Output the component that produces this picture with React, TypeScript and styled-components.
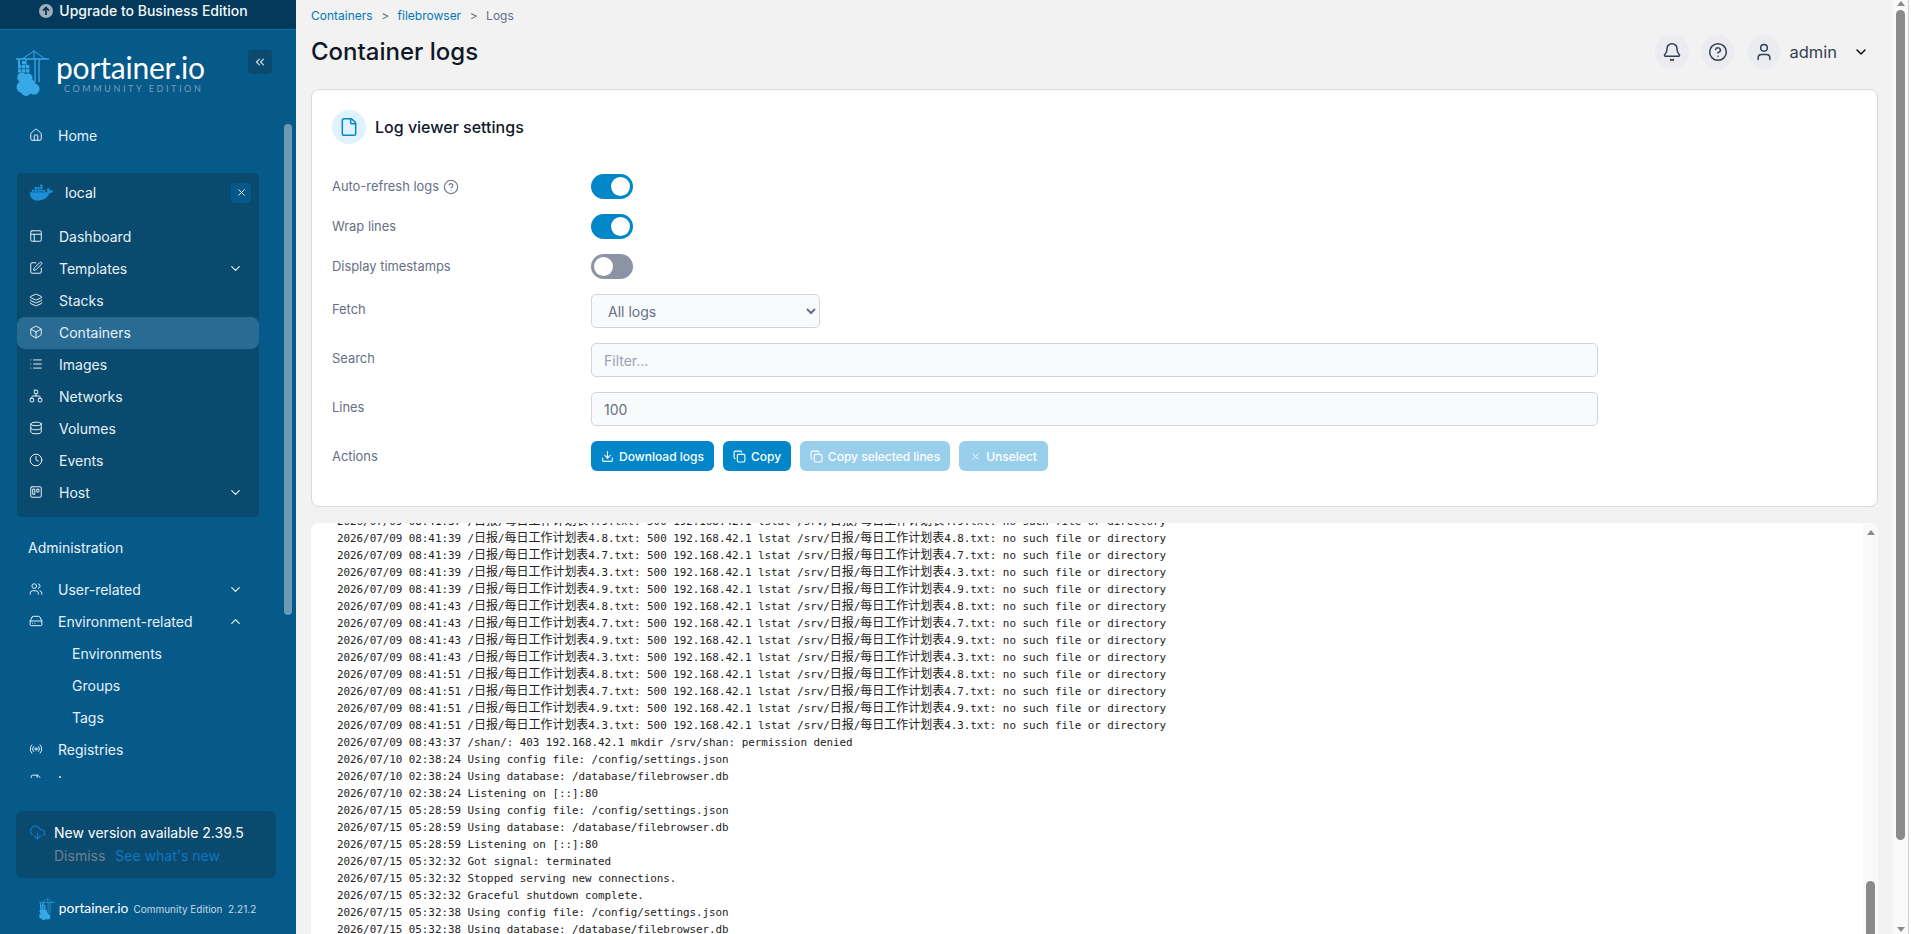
import React from 'react';
import styled, { createGlobalStyle } from 'styled-components';
import {
  Home, X, PanelsTopLeft, SquarePen, Layers, Box, List, Network, Database, Clock, Trello, Users, HardDrive, Radio,
  FileClock, Bell, CircleHelp, User, ChevronDown, ChevronUp, ChevronsLeft, Download, Copy, File, CloudDownload,
} from 'lucide-react';
import { FaDocker } from 'react-icons/fa';

const Global = createGlobalStyle`
  html, body { margin: 0; padding: 0; height: 100%; overflow: hidden; }
  body { font-family: Inter, "Liberation Sans", sans-serif; background: #f2f2f2; }
  * { box-sizing: border-box; }
`;

const Page = styled.div`
  display: flex;
  width: 1911px;
  height: 934px;
  overflow: hidden;
`;

/* ---------- sidebar ---------- */
const Sidebar = styled.aside`
  width: 296px;
  flex: none;
  height: 100%;
  display: flex;
  flex-direction: column;
  background: #055a8a;
  color: #eef5fa;
  font-size: 14px;
`;
const Banner = styled.div`
  height: 30px;
  flex: none;
  display: flex;
  justify-content: center;
  align-items: flex-start;
  gap: 6px;
  padding-top: 2px;
  padding-right: 9px;
  background: #033a5c;
  border-bottom: 1px solid #0a6ca5;
  font-weight: 500;
  font-size: 14px;
  line-height: 18px;
  color: #f4f8fb;
`;
const LogoRow = styled.div`
  height: 90px;
  flex: none;
  display: flex;
  align-items: flex-start;
  padding: 20px 24px 0 16px;
  gap: 7px;
`;
const LogoText = styled.div`
  flex: 1;
  display: flex;
  flex-direction: column;
  padding-top: 1px;
`;
const LogoName = styled.span`
  font-family: Lato, sans-serif;
  font-size: 30px;
  line-height: 32px;
  color: #fff;
  letter-spacing: -0.2px;
`;
const LogoSub = styled.span`
  font-family: Lato, sans-serif;
  font-size: 9px;
  line-height: 11px;
  letter-spacing: 2.6px;
  color: #7f9cb2;
  padding-left: 8px;
  white-space: nowrap;
`;
const CollapseBtn = styled.div`
  width: 24px;
  height: 24px;
  flex: none;
  background: #0a4a6e;
  border-radius: 4px;
  display: flex;
  align-items: center;
  justify-content: center;
  color: #cfe0ec;
`;
const Nav = styled.nav`
  position: relative;
  height: 658px;
  flex: none;
  overflow: hidden;
`;
const NavThumb = styled.div`
  position: absolute;
  left: 284px;
  top: 4px;
  width: 8px;
  height: 491px;
  border-radius: 4px;
  background: #6b9ab8;
`;
const Row = styled.div<{ $active?: boolean; $sub?: boolean; $tight?: boolean }>`
  height: 32px;
  margin: 0;
  display: flex;
  align-items: center;
  padding: 0 16px 2px ${p => (p.$sub ? '55px' : '12px')};
  gap: ${p => (p.$tight ? '15px' : '16px')};
  border-radius: 8px;
  background: ${p => (p.$active ? '#2a6b94' : 'transparent')};
  color: #e6f1f8;
`;
const TopRows = styled.div`
  margin-left: 17px;
  width: 242px;
`;
const RowLabel = styled.span`
  flex: 1;
  white-space: nowrap;
`;
const EnvBlock = styled.div`
  margin: 21px 0 0 17px;
  width: 242px;
  height: 344px;
  background: #0a4a6e;
  border-radius: 4px;
`;
const EnvHead = styled.div`
  height: 48px;
  display: flex;
  align-items: center;
  padding: 0 8px 9px 13px;
  gap: 12px;
  color: #f2f7fb;
`;
const EnvClose = styled.div`
  width: 20px;
  height: 20px;
  background: #07588a;
  border-radius: 3px;
  display: flex;
  align-items: center;
  justify-content: center;
`;
const SectionTitle = styled.div`
  height: 57px;
  padding: 22px 0 0 28px;
  line-height: 17px;
  color: #eaf2f8;
`;
const UpdateBox = styled.div`
  margin: 33px 0 0 16px;
  width: 260px;
  height: 67px;
  flex: none;
  background: #0a4a6e;
  border-radius: 6px;
  padding: 13px 0 0 13px;
  display: flex;
  gap: 8px;
`;
const UpdateBody = styled.div`
  display: flex;
  flex-direction: column;
  gap: 6px;
  line-height: 17px;
`;
const UpdateTitle = styled.span`
  color: #fff;
  white-space: nowrap;
`;
const UpdateLinks = styled.div`
  display: flex;
  gap: 10px;
`;
const Dismiss = styled.span`
  color: #6d8192;
`;
const WhatsNew = styled.span`
  color: #0d78c4;
`;
const Foot = styled.div`
  display: flex;
  align-items: center;
  margin: 20px 0 0 39px;
  gap: 4px;
`;
const FootName = styled.span`
  font-family: Lato, sans-serif;
  font-size: 13.8px;
  color: #fff;
  margin-bottom: 3px;
`;
const FootEdition = styled.span`
  font-size: 10px;
  color: #c8d8e3;
  white-space: nowrap;
  margin-left: 1px;
`;

/* ---------- main ---------- */
const Main = styled.main`
  flex: 1;
  min-width: 0;
  height: 100%;
  display: flex;
  flex-direction: column;
  padding: 0 15px;
  background: #f2f2f2;
`;
const Crumbs = styled.div`
  height: 30px;
  flex: none;
  display: flex;
  align-items: center;
  font-size: 12px;
  color: #667085;
`;
const CrumbLink = styled.span`
  color: #0078b8;
`;
const CrumbSep = styled.span`
  margin: 0 8.5px;
`;
const HeaderRow = styled.div`
  height: 59px;
  flex: none;
  display: flex;
  align-items: flex-start;
  justify-content: space-between;
`;
const Title = styled.h1`
  margin: 5px 0 0;
  font-size: 24px;
  line-height: 34px;
  font-weight: 500;
  color: #101828;
`;
const HeaderActions = styled.div`
  display: flex;
  align-items: center;
  gap: 12px;
  margin-top: 5px;
  padding-right: 9px;
`;
const RoundBtn = styled.div`
  width: 34px;
  height: 34px;
  border-radius: 50%;
  background: #eaecf0;
  display: flex;
  align-items: center;
  justify-content: center;
  color: #344054;
`;
const UserName = styled.span`
  font-size: 16.5px;
  color: #344054;
  margin-left: -4px;
  margin-right: 4px;
`;
const Card = styled.section`
  height: 418px;
  flex: none;
  background: #fff;
  border: 1px solid #d8d8e4;
  border-radius: 8px;
  padding: 20px 20px 0;
`;
const CardHead = styled.div`
  display: flex;
  align-items: center;
  gap: 9px;
  height: 34px;
  margin-bottom: 30px;
`;
const CardIcon = styled.div`
  width: 34px;
  height: 34px;
  border-radius: 50%;
  background: #e0f2fe;
  display: flex;
  align-items: center;
  justify-content: center;
  color: #0086c9;
`;
const CardTitle = styled.h2`
  margin: 0;
  font-size: 16px;
  font-weight: 500;
  color: #101828;
`;
const FormRow = styled.div<{ $h: number }>`
  display: flex;
  align-items: flex-start;
  height: ${p => p.$h}px;
`;
const FormLabel = styled.div<{ $drop?: number }>`
  width: 259px;
  flex: none;
  display: flex;
  align-items: center;
  gap: 4px;
  height: 25px;
  margin-top: ${p => p.$drop ?? 0}px;
  font-size: 12.9px;
  color: #667085;
`;
const Switch = styled.div<{ $on?: boolean }>`
  width: 42px;
  height: 25px;
  border-radius: 13px;
  padding: 3px;
  display: flex;
  justify-content: ${p => (p.$on ? 'flex-end' : 'flex-start')};
  background: ${p => (p.$on ? '#0086c9' : '#8c93a4')};
  &::after {
    content: '';
    width: 19px;
    height: 19px;
    border-radius: 50%;
    background: #fff;
  }
`;
const SelectBox = styled.select`
  width: 229px;
  height: 34px;
  padding: 0 8px 0 12px;
  font: 14px Inter, sans-serif;
  color: #667085;
  background: #f9fafb;
  border: 1px solid #d0d5dd;
  border-radius: 5px;
`;
const TextInput = styled.input`
  width: 1007px;
  height: 34px;
  padding: 0 12px;
  font: 14px Inter, sans-serif;
  color: #667085;
  background: #f9fafb;
  border: 1px solid #d0d5dd;
  border-radius: 5px;
  &::placeholder { color: #98a2b3; opacity: 1; }
`;
const Actions = styled.div`
  display: flex;
  gap: 9px;
`;
const Btn = styled.div<{ $w: number; $off?: boolean }>`
  width: ${p => p.$w}px;
  height: 30px;
  display: flex;
  align-items: center;
  justify-content: center;
  gap: 5px;
  border-radius: 6px;
  font-size: 12px;
  font-weight: 500;
  white-space: nowrap;
  color: #fff;
  background: ${p => (p.$off ? '#99cfea' : '#0086c9')};
`;
const LogPanel = styled.section`
  margin-top: 16px;
  flex: 1;
  min-height: 0;
  display: flex;
  background: #fff;
  border-radius: 8px 8px 0 0;
  overflow: hidden;
`;
const LogScroll = styled.div`
  flex: 1;
  min-width: 0;
  overflow: hidden;
  padding-left: 26px;
`;
const LogList = styled.div`
  margin-top: -10px;
  font-family: "DejaVu Sans Mono", "Liberation Mono", monospace;
  font-size: 10.9px;
  line-height: 17.03px;
  letter-spacing: -0.03px;
  color: #222;
`;
const LogLine = styled.div`
  white-space: pre;
  height: 17.03px;
`;
const Cjk = styled.span`
  font-family: "Noto Sans CJK SC", sans-serif;
  font-size: 12px;
  line-height: 1;
`;
const Track = styled.div<{ $w: number; $line?: boolean }>`
  width: ${p => p.$w}px;
  flex: none;
  height: 100%;
  display: flex;
  flex-direction: column;
  align-items: center;
  background: #f9f9f9;
  border-right: ${p => (p.$line ? '1px solid #cfcfcf' : 'none')};
`;
const Arrow = styled.div<{ $down?: boolean }>`
  width: 0;
  height: 0;
  border-left: 4.5px solid transparent;
  border-right: 4.5px solid transparent;
  ${p => (p.$down ? 'border-top: 5px solid #8a8a8a;' : 'border-bottom: 5px solid #8a8a8a;')}
`;
const Thumb = styled.div<{ $top: number; $h: number }>`
  width: 9px;
  margin-top: ${p => p.$top}px;
  height: ${p => p.$h}px;
  border-radius: 5px;
  background: #8a8a8a;
`;
const PageRight = styled.div`
  width: 18px;
  flex: none;
  height: 100%;
  display: flex;
  background: #fff;
`;
const PageTrack = styled(Track)`
  justify-content: space-between;
  padding: 1px 0 2px;
`;
const ThumbGroup = styled.div`
  display: flex;
  flex-direction: column;
  align-items: center;
  flex: 1;
`;

const CraneIcon = ({ s = 1 }: { s?: number }) => (
  <svg width={33 * s} height={46 * s} viewBox="0 0 33 46" fill="none" style={{ flex: 'none' }}>
    <g stroke="#37a9e6" strokeWidth="1.3">
      <path d="M0 9h33" />
      <path d="M18 0.5V9M6 9 18 1l11 8" strokeWidth="1" />
      <path d="M19 9v23M23 9v23" />
      <path d="M10 9v6" />
    </g>
    <g fill="#37a9e6">
      <rect x="2" y="9.5" width="2" height="7" />
      <rect x="2" y="15" width="3.4" height="3.4" />
      <rect x="6" y="15" width="3.4" height="3.4" />
      <rect x="10" y="15" width="3.4" height="3.4" />
      <rect x="2" y="19.2" width="3.4" height="3.4" />
      <rect x="6" y="19.2" width="3.4" height="3.4" />
      <rect x="10" y="19.2" width="3.4" height="3.4" />
      <rect x="6" y="11" width="3.4" height="3.4" />
      <circle cx="6" cy="27.5" r="4.8" />
      <circle cx="12" cy="28" r="4.6" />
      <circle cx="6.5" cy="37" r="6" />
      <circle cx="13" cy="35" r="6.5" />
      <circle cx="18" cy="39" r="5.6" />
      <circle cx="10" cy="41" r="5" />
    </g>
  </svg>
);

const UpgradeIcon = () => (
  <svg width="14" height="14" viewBox="0 0 14 14" style={{ marginTop: 2, flex: 'none' }}>
    <circle cx="7" cy="7" r="7" fill="#a3adb8" />
    <path d="M7 11V4M4 6.6 7 3.6l3 3" stroke="#033a5c" strokeWidth="1.8" fill="none" />
  </svg>
);

const iconProps = { size: 14, strokeWidth: 1.7 };

const Item = ({ icon: I, label, active, chevron, tight }: { icon: any; label: string; active?: boolean; chevron?: 'up' | 'down'; tight?: boolean }) => (
  <Row $active={active} $tight={tight}>
    <I {...iconProps} />
    <RowLabel>{label}</RowLabel>
    {chevron === 'down' && <ChevronDown size={15} />}
    {chevron === 'up' && <ChevronUp size={15} />}
  </Row>
);

const mixed = (text: string) =>
  text.split(/([\u4e00-\u9fff]+)/).map((part, i) => (i % 2 ? <Cjk key={i}>{part}</Cjk> : part));

const err = (t: string, v: string) =>
  `2026/07/09 08:41:${t} /日报/每日工作计划表${v}.txt: 500 192.168.42.1 lstat /srv/日报/每日工作计划表${v}.txt: no such file or directory`;

const logLines = [
  err('37', '4.9'),
  err('39', '4.8'), err('39', '4.7'), err('39', '4.3'), err('39', '4.9'),
  err('43', '4.8'), err('43', '4.7'), err('43', '4.9'), err('43', '4.3'),
  err('51', '4.8'), err('51', '4.7'), err('51', '4.9'), err('51', '4.3'),
  '2026/07/09 08:43:37 /shan/: 403 192.168.42.1 mkdir /srv/shan: permission denied',
  '2026/07/10 02:38:24 Using config file: /config/settings.json',
  '2026/07/10 02:38:24 Using database: /database/filebrowser.db',
  '2026/07/10 02:38:24 Listening on [::]:80',
  '2026/07/15 05:28:59 Using config file: /config/settings.json',
  '2026/07/15 05:28:59 Using database: /database/filebrowser.db',
  '2026/07/15 05:28:59 Listening on [::]:80',
  '2026/07/15 05:32:32 Got signal: terminated',
  '2026/07/15 05:32:32 Stopped serving new connections.',
  '2026/07/15 05:32:32 Graceful shutdown complete.',
  '2026/07/15 05:32:38 Using config file: /config/settings.json',
  '2026/07/15 05:32:38 Using database: /database/filebrowser.db',
];

export default function App() {
  return (
    <Page>
      <Global />
      <Sidebar>
        <Banner><UpgradeIcon />Upgrade to Business Edition</Banner>
        <LogoRow>
          <CraneIcon />
          <LogoText>
            <LogoName>portainer.io</LogoName>
            <LogoSub>COMMUNITY EDITION</LogoSub>
          </LogoText>
          <CollapseBtn><ChevronsLeft size={14} /></CollapseBtn>
        </LogoRow>
        <Nav>
          <NavThumb />
          <TopRows><Item icon={Home} label="Home" tight /></TopRows>
          <EnvBlock>
            <EnvHead>
              <FaDocker size={23} color="#1d8fd8" />
              <RowLabel>local</RowLabel>
              <EnvClose><X size={11} /></EnvClose>
            </EnvHead>
            <Item icon={PanelsTopLeft} label="Dashboard" />
            <Item icon={SquarePen} label="Templates" chevron="down" />
            <Item icon={Layers} label="Stacks" />
            <Item icon={Box} label="Containers" active />
            <Item icon={List} label="Images" />
            <Item icon={Network} label="Networks" />
            <Item icon={Database} label="Volumes" />
            <Item icon={Clock} label="Events" />
            <Item icon={Trello} label="Host" chevron="down" />
          </EnvBlock>
          <SectionTitle>Administration</SectionTitle>
          <TopRows>
            <Item icon={Users} label="User-related" chevron="down" tight />
            <Item icon={HardDrive} label="Environment-related" chevron="up" tight />
            <Row $sub><RowLabel>Environments</RowLabel></Row>
            <Row $sub><RowLabel>Groups</RowLabel></Row>
            <Row $sub><RowLabel>Tags</RowLabel></Row>
            <Item icon={Radio} label="Registries" tight />
            <Item icon={FileClock} label="Logs" tight />
          </TopRows>
        </Nav>
        <UpdateBox>
          <CloudDownload size={17} color="#0d78c4" strokeWidth={1.7} />
          <UpdateBody>
            <UpdateTitle>New version available 2.39.5</UpdateTitle>
            <UpdateLinks><Dismiss>Dismiss</Dismiss><WhatsNew>See what's new</WhatsNew></UpdateLinks>
          </UpdateBody>
        </UpdateBox>
        <Foot>
          <CraneIcon s={0.48} />
          <FootName>portainer.io</FootName>
          <FootEdition>Community Edition&nbsp; 2.21.2</FootEdition>
        </Foot>
      </Sidebar>

      <Main>
        <Crumbs>
          <CrumbLink>Containers</CrumbLink><CrumbSep>&gt;</CrumbSep>
          <CrumbLink>filebrowser</CrumbLink><CrumbSep>&gt;</CrumbSep>
          <span>Logs</span>
        </Crumbs>
        <HeaderRow>
          <Title>Container logs</Title>
          <HeaderActions>
            <RoundBtn><Bell size={20} strokeWidth={1.8} /></RoundBtn>
            <RoundBtn><CircleHelp size={20} strokeWidth={1.8} /></RoundBtn>
            <RoundBtn><User size={20} strokeWidth={1.8} /></RoundBtn>
            <UserName>admin</UserName>
            <ChevronDown size={16} />
          </HeaderActions>
        </HeaderRow>
        <Card>
          <CardHead>
            <CardIcon><File size={20} strokeWidth={1.8} /></CardIcon>
            <CardTitle>Log viewer settings</CardTitle>
          </CardHead>
          <FormRow $h={40}>
            <FormLabel>Auto-refresh logs <CircleHelp size={16} strokeWidth={1.6} /></FormLabel>
            <Switch $on />
          </FormRow>
          <FormRow $h={40}><FormLabel>Wrap lines</FormLabel><Switch $on /></FormRow>
          <FormRow $h={40}><FormLabel>Display timestamps</FormLabel><Switch /></FormRow>
          <FormRow $h={49}>
            <FormLabel $drop={3}>Fetch</FormLabel>
            <SelectBox defaultValue="All logs"><option>All logs</option></SelectBox>
          </FormRow>
          <FormRow $h={49}>
            <FormLabel $drop={3}>Search</FormLabel>
            <TextInput placeholder="Filter..." readOnly />
          </FormRow>
          <FormRow $h={49}>
            <FormLabel $drop={3}>Lines</FormLabel>
            <TextInput defaultValue="100" readOnly />
          </FormRow>
          <FormRow $h={30}>
            <FormLabel $drop={3}>Actions</FormLabel>
            <Actions>
              <Btn $w={123}><Download size={13} />Download logs</Btn>
              <Btn $w={68}><Copy size={13} />Copy</Btn>
              <Btn $w={150} $off><Copy size={13} />Copy selected lines</Btn>
              <Btn $w={89} $off><X size={11} />Unselect</Btn>
            </Actions>
          </FormRow>
        </Card>
        <LogPanel>
          <LogScroll>
            <LogList>
              {logLines.map((l, i) => <LogLine key={i}>{mixed(l)}</LogLine>)}
            </LogList>
          </LogScroll>
          <Track $w={15}>
            <ThumbGroup>
              <Arrow style={{ marginTop: 7 }} />
              <Thumb $top={346} $h={60} />
            </ThumbGroup>
          </Track>
        </LogPanel>
      </Main>

      <PageRight>
        <PageTrack $w={16} $line>
          <Arrow />
          <Thumb $top={4} $h={830} />
          <ThumbGroup />
          <Arrow $down />
        </PageTrack>
      </PageRight>
    </Page>
  );
}
